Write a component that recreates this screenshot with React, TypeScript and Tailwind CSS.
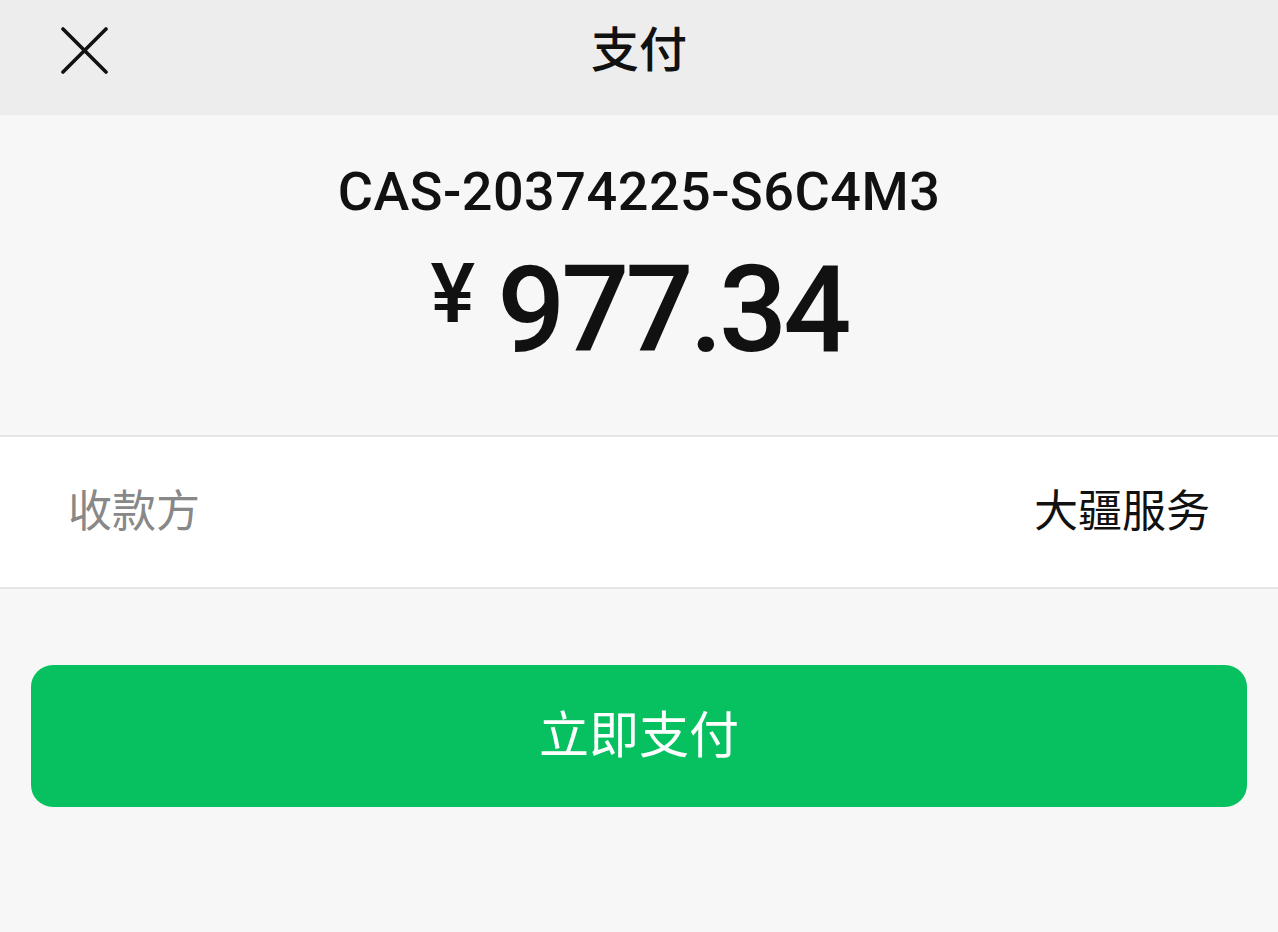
const cjk = "font-['Roboto','Noto_Sans_CJK_SC',sans-serif]";

const CloseIcon = () => (
  <svg width="48" height="48" viewBox="0 0 48 48" fill="none">
    <path d="M3 3L46 46M46 3L3 46" stroke="#111" strokeWidth="3.6" strokeLinecap="round" />
  </svg>
);

const App = () => {
  return (
    <div className={`min-h-[932px] bg-[#f7f7f7] ${cjk}`}>
      <header className="relative h-[115px] bg-[#ededed] flex justify-center">
        <button className="absolute left-[60px] top-[26px]">
          <CloseIcon />
        </button>
        <h1 className="mt-[22px] text-[48px] leading-[58px] font-medium text-[#111]">支付</h1>
      </header>

      <section className="h-[320px] flex flex-col items-center">
        <p className="mt-[47px] text-[54px] leading-[60px] font-medium text-[#111] tracking-[0.5px]">
          CAS-20374225-S6C4M3
        </p>
        <div className="mt-[28px] flex items-start text-[#111]">
          <span className="text-[84px] leading-none font-medium mt-[2px] mr-[22px]">¥</span>
          <span className="text-[120px] leading-none font-medium tracking-[-4px]">977.34</span>
        </div>
      </section>

      <div className="h-[154px] bg-white border-y-2 border-[#e5e5e5] flex items-center justify-between px-[68px] text-[44px]">
        <span className="text-[#888]">收款方</span>
        <span className="text-[#111]">大疆服务</span>
      </div>

      <div className="px-[31px] pt-[76px]">
        <button className="w-full h-[142px] rounded-[22px] bg-[#07c160] text-white text-[50px]">
          立即支付
        </button>
      </div>
    </div>
  );
};

export default App;
